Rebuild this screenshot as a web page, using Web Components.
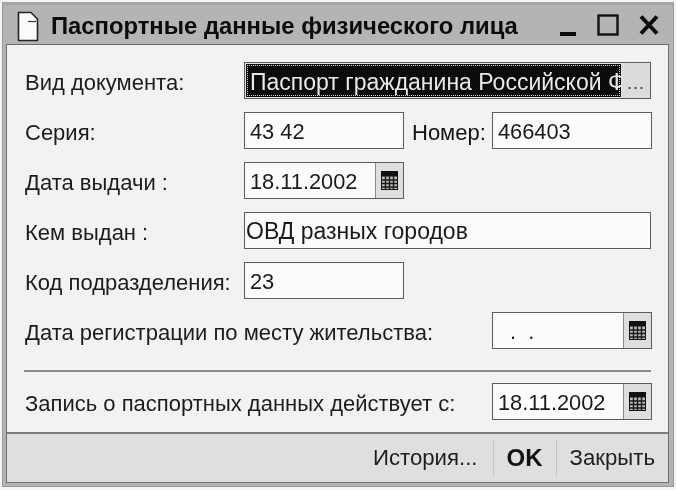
<!DOCTYPE html>
<html lang="ru">
<head>
<meta charset="utf-8">
<title>Паспортные данные</title>
<style>
	html, body { margin: 0; padding: 0; width: 676px; height: 490px; overflow: hidden; background: #fff; }
</style>
</head>
<body>
<template id="dialogWindow">
	<style>
		:host {
			display: flex;
			flex-direction: column;
			box-sizing: border-box;
			width: 676px;
			height: 490px;
			padding: 2px 2px 3px 2px;
			background: #f4f4f4;
			font-family: "Liberation Sans", Arial, sans-serif;
			color: #141414;
			filter: blur(0.4px);
		}
		.frame {
			flex: 1;
			display: flex;
			flex-direction: column;
			background: #b4b4b4;
			border: 1px solid #999;
			border-top: 3px solid #a6a6a6;
			padding: 0 4px 3px 3px;
			min-height: 0;
		}
		.body {
			flex: 1;
			display: flex;
			flex-direction: column;
			min-height: 0;
			border: 1px solid #6e6e6e;
			border-bottom-color: #777;
			background: #f2f2f2;
		}
	</style>
	<div class="frame">
		<slot name="title"></slot>
		<div class="body">
			<slot></slot>
			<slot name="footer"></slot>
		</div>
	</div>
</template>

<template id="titleBar">
	<style>
		:host {
			display: flex;
			align-items: center;
			height: 39px;
			flex: none;
			padding-left: 11px;
		}
		.doc { flex: none; margin-top: 3px; }
		.text {
			flex: 1;
			margin-left: 12px;
			padding-top: 2px;
			font-size: 23.800px;
			font-weight: bold;
			white-space: nowrap;
			color: #0c0c0c;
		}
		.controls { display: flex; align-items: center; gap: 20px; padding-right: 10px; flex: none; }
		svg { display: block; }
	</style>
	<svg class="doc" width="22" height="31" viewBox="0 0 22 31">
		<path d="M1.500 1.500H14L20.500 8V29.500H1.500Z" fill="#fbfbfb" stroke="#222" stroke-width="1.600" stroke-linejoin="round"/>
		<path d="M11 10.500H19" stroke="#333" stroke-width="1.200"/>
	</svg>
	<span class="text"><slot></slot></span>
	<div class="controls">
		<svg width="17" height="24" viewBox="0 0 17 24"><rect x="0" y="19" width="16" height="4" fill="#0c0c0c"/></svg>
		<svg width="22" height="24" viewBox="0 0 22 24"><rect x="1.500" y="2.500" width="19" height="19" fill="none" stroke="#111" stroke-width="2.400"/></svg>
		<svg width="20" height="24" viewBox="0 0 20 24"><path d="M2 3.500L18 20.500M18 3.500L2 20.500" fill="none" stroke="#0c0c0c" stroke-width="4"/></svg>
	</div>
</template>

<template id="formPanel">
	<style>
		:host {
			display: flex;
			flex-direction: column;
			flex: 1;
			gap: 13px;
			padding: 17px 17px 0 17px;
			min-height: 0;
		}
	</style>
	<slot></slot>
</template>

<template id="formRow">
	<style>
		:host {
			display: flex;
			align-items: center;
			height: 37px;
			font-size: 22px;
			white-space: nowrap;
		}
		.label { flex: none; width: var(--label-width, 220px); padding-top: 4px; padding-left: 1px; margin-right: -1px; color: #1c1c1c; }
		.content { flex: 1; display: flex; align-items: center; min-width: 0; }
	</style>
	<span class="label"><slot name="label"></slot></span>
	<div class="content"><slot></slot></div>
</template>

<template id="textField">
	<style>
		:host {
			display: flex;
			box-sizing: border-box;
			height: 37px;
			width: var(--field-width, 100%);
			flex: none;
			border: 1.500px solid #5c5c5c;
			background: #fbfbfb;
			overflow: hidden;
		}
		:host([wide]) .value { font-size: 23px; padding-left: 1px; }
		.value {
			flex: 1;
			min-width: 0;
			padding-left: 5px;
			line-height: 37px;
			font-size: 21.800px;
			color: #1a1a1a;
			overflow: hidden;
			white-space: nowrap;
		}
		.pick {
			flex: none;
			width: 27px;
			display: flex;
			align-items: center;
			justify-content: center;
			border-left: 1px solid #8a8a8a;
			background: #dedede;
		}
		:host(:not([picker])) .pick { display: none; }
	</style>
	<span class="value"><slot></slot></span>
	<span class="pick">
		<svg width="17" height="19" viewBox="0 0 17 19">
			<rect x="0.500" y="0.500" width="16" height="18" fill="#bdbdb6" stroke="#111"/>
			<rect x="0" y="0" width="17" height="5.500" fill="#111"/>
			<path d="M0 9H17M0 12.500H17M0 16H17M4.500 5V19M8.500 5V19M12.500 5V19" stroke="#1a1a1a" stroke-width="1.400"/>
		</svg>
	</span>
</template>

<template id="comboField">
	<style>
		:host {
			display: flex;
			box-sizing: border-box;
			height: 37px;
			width: 100%;
			border: 1.500px solid #5c5c5c;
			background: #e4e4e4;
		}
		.value {
			flex: 1;
			min-width: 0;
			margin: 1px;
			padding-left: 4px;
			background: #0b0b0b;
			outline: 1.500px dotted #d8d8d8;
			outline-offset: -2px;
			color: #e9e9e9;
			font-size: 23px;
			line-height: 37px;
			overflow: hidden;
			white-space: nowrap;
		}
		.more {
			flex: none;
			width: 28px;
			background: #dcdcdc;
			color: #333;
			font-size: 18px;
			letter-spacing: 1px;
			text-align: center;
			line-height: 40px;
		}
	</style>
	<span class="value"><slot></slot></span>
	<span class="more">...</span>
</template>

<template id="dialogFooter">
	<style>
		:host {
			display: flex;
			flex: none;
			justify-content: flex-end;
			align-items: center;
			box-sizing: border-box;
			height: 50px;
			padding: 2px 0 3px;
			background: #dfdfdf;
			border-top: 2px solid #7b7b7b;
		}
	</style>
	<slot></slot>
</template>

<template id="footerButton">
	<style>
		:host {
			display: flex;
			align-items: center;
			height: 36px;
			padding: 0 13px;
			font-size: 22.200px;
			color: #1e1e1e;
			border-left: 1.500px solid #c4c4c4;
			white-space: nowrap;
		}
		:host([first]) { border-left: none; padding-right: 15px; }
		:host([primary]) { font-weight: bold; font-size: 24px; color: #141414; }
	</style>
	<slot></slot>
</template>

<template id="formRule">
	<style>
		:host { display: block; height: 2px; background: #8c8c8c; margin: 8px 0 -2px; flex: none; }
	</style>
</template>

<dialog-window>
	<title-bar slot="title">Паспортные данные физического лица</title-bar>
	<form-panel>
		<form-row>
			<span slot="label">Вид документа:</span>
			<combo-field>Паспорт гражданина Российской Ф</combo-field>
		</form-row>
		<form-row style="--field-width:160px">
			<span slot="label">Серия:</span>
			<text-field>43 42</text-field>
			<span style="margin-left:8px;width:80px;flex:none;padding-top:4px">Номер:</span>
			<text-field>466403</text-field>
		</form-row>
		<form-row style="--field-width:160px">
			<span slot="label">Дата выдачи :</span>
			<text-field picker>18.11.2002</text-field>
		</form-row>
		<form-row>
			<span slot="label">Кем выдан :</span>
			<text-field wide>ОВД разных городов</text-field>
		</form-row>
		<form-row style="--field-width:160px">
			<span slot="label">Код подразделения:</span>
			<text-field>23</text-field>
		</form-row>
		<form-row style="--label-width:468px;--field-width:160px">
			<span slot="label">Дата регистрации по месту жительства:</span>
			<text-field picker>&nbsp;&nbsp;.&nbsp;&nbsp;.</text-field>
		</form-row>
		<form-rule></form-rule>
		<form-row style="--label-width:468px;--field-width:160px">
			<span slot="label">Запись о паспортных данных действует с:</span>
			<text-field picker>18.11.2002</text-field>
		</form-row>
	</form-panel>
	<dialog-footer slot="footer">
		<footer-button first>История...</footer-button>
		<footer-button primary>OK</footer-button>
		<footer-button>Закрыть</footer-button>
	</dialog-footer>
</dialog-window>

<script>
	(function(customElements) {
		'use strict';

		// every element here only clones its template into an open shadow root
		const components = {
			'dialog-window': 'dialogWindow',
			'title-bar': 'titleBar',
			'form-panel': 'formPanel',
			'form-row': 'formRow',
			'text-field': 'textField',
			'combo-field': 'comboField',
			'dialog-footer': 'dialogFooter',
			'footer-button': 'footerButton',
			'form-rule': 'formRule'
		};

		Object.keys(components).forEach((name) => {
			const t = document.getElementById(components[name]);
			customElements.define(name, class extends HTMLElement {
				constructor() {
					super();
					this.attachShadow({mode: 'open'}).appendChild(t.content.cloneNode(true));
				}
			});
		});
	})(window.customElements);
</script>
</body>
</html>
